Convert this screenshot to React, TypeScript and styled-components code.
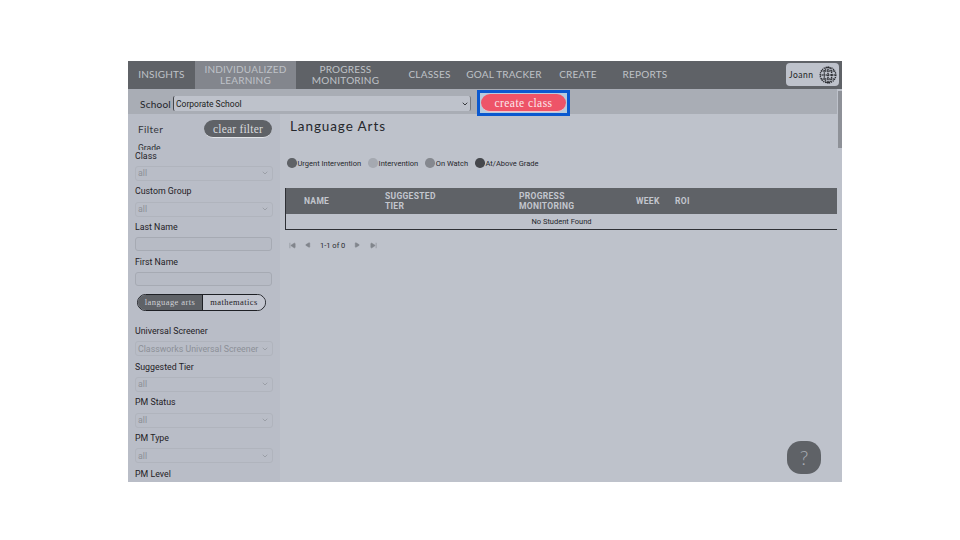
import React from "react";
import styled, { createGlobalStyle } from "styled-components";
import { ChevronDown, SkipBack, SkipForward, Play } from "lucide-react";

const Global = createGlobalStyle`
  html, body { margin: 0; padding: 0; background: #fff; }
  #root { width: 960px; height: 540px; overflow: hidden; }
  * { box-sizing: border-box; }
`;
const Frame = styled.div`
  position: relative; margin: 61px 0 0 128px; width: 714px; height: 421px;
  background: #bec2cb; display: flex; flex-direction: column; overflow: hidden;
  font-family: Roboto, sans-serif; color: #23252a;
`;
const Nav = styled.nav`
  height: 28px; background: #5f6267; display: flex; align-items: stretch; flex: none;
`;
const NavItem = styled.div<{ $w: number; $active?: boolean }>`
  width: ${p => p.$w}px; flex: none; display: flex; align-items: center; justify-content: center; text-align: center; white-space: nowrap;
  padding-bottom: 1px; font: 400 10px/11px Lato, sans-serif; letter-spacing: .2px; color: #bfc2c8;
  background: ${p => (p.$active ? "#83868d" : "transparent")};
`;
const UserChip = styled.div`
  margin: 2px 3px 3px auto; width: 53px; border-radius: 4px; background: #bec2cb; display: flex; align-items: center;
  justify-content: space-between; padding: 0 2px 0 3px; font: 400 8.5px Lato, sans-serif; letter-spacing: .5px; color: #1d1f24;
`;
const SchoolBar = styled.div`
  height: 25px; background: #a9adb5; display: flex; align-items: flex-start; flex: none; padding-left: 12px;
`;
const SchoolLabel = styled.span`
  font: 400 10px/30px Lato, sans-serif; letter-spacing: .25px; color: #22242a; width: 33px; height: 25px;
`;
const SchoolSelect = styled.div`
  width: 298px; height: 15px; margin-top: 7px; background: #bec2cb; border-left: 1px solid #44464b; border-right: 1px solid #77797f;
  border-radius: 2px; display: flex; align-items: center; justify-content: space-between; padding: 1px 1px 0 2px;
  font: 400 8.5px Roboto, sans-serif; color: #1c1e22;
`;
const Highlight = styled.div`
  position: relative; z-index: 2; margin: 1px 0 0 6px; width: 93px; height: 26px; border: 3px solid #0a58cf;
  background: #b7ccde; padding: 1px; display: flex; justify-content: center;
`;
const CreateButton = styled.div`
  width: 85px; height: 18px; border-radius: 9px; background: #ee5468; color: #fbe9ec; border-bottom: 1px solid #f4c3cb;
  font: 400 11.5px/18px "Liberation Serif", serif; letter-spacing: .45px; text-align: center;
`;
const Body = styled.div`
  flex: 1; display: flex; min-height: 0;
`;
const Side = styled.aside`
  width: 152px; flex: none; background: #b9bdc7; padding: 0 0 0 7px; overflow: hidden;
`;
const FilterHead = styled.div`
  height: 36.7px; padding: 6px 8px 0 3px; overflow: hidden;
`;
const FilterRow = styled.div`
  display: flex; justify-content: space-between; align-items: center; height: 18px; font: 400 10px Lato, sans-serif; letter-spacing: .4px; color: #34363c;
`;
const ClearButton = styled.div`
  width: 68px; height: 18px; border-radius: 9px; background: #5f6267; border-bottom: 1px solid #e2e4e8; color: #d8dade;
  font: 400 11.5px/18px "Liberation Serif", serif; letter-spacing: .2px; text-align: center;
`;
const GradeLabel = styled.div`
  font: 400 8.5px/9px Roboto, sans-serif; margin-top: 6px; color: #2a2c31; height: 6px; overflow: hidden;
`;
const FieldLabel = styled.div`
  font: 400 8.8px/10px Roboto, sans-serif; color: #1f2126; height: 10px; margin-bottom: 5.3px;
`;
const Field = styled.div<{ $gap?: number }>`
  margin-bottom: ${p => p.$gap ?? 5.45}px;
`;
const SelectBox = styled.div`
  width: 138px; height: 15px; border: 1px solid #b0b4bd; border-radius: 3px; background: #b9bdc7; display: flex; align-items: center;
  justify-content: space-between; padding: 0 3px 0 2px; font: 400 8.8px Roboto, sans-serif; color: #8c9097;
`;
const TextBox = styled.div`
  width: 137px; height: 14px; border: 1px solid #a6aab3; border-radius: 3px; background: #b7bbc5;
`;
const Toggle = styled.div`
  display: flex; width: 129px; height: 17px; margin-left: 2px; border: 1px solid #1e2025; border-radius: 9px; overflow: hidden;
`;
const ToggleOption = styled.div<{ $on?: boolean; $w: number }>`
  width: ${p => p.$w}px; flex: none; background: ${p => (p.$on ? "#5f6267" : "#c3c6d0")}; color: ${p => (p.$on ? "#cfd1d6" : "#1f2126")};
  border-left: ${p => (p.$on ? "none" : "1px solid #1e2025")}; font: 400 8.5px/15px "Liberation Serif", serif; letter-spacing: .4px; text-align: center;
`;
const SideGap = styled.div`
  height: 14.7px;
`;
const Main = styled.main`
  flex: 1; min-width: 0; padding: 0 4px 0 5px; display: flex; flex-direction: column; position: relative;
`;
const Title = styled.h1`
  margin: 4px 0 0 5px; font: 400 13.5px/16px Lato, sans-serif; letter-spacing: .9px; color: #25272c;
`;
const Legend = styled.div`
  display: flex; gap: 7px; margin: 23px 0 0 2px; height: 12px; align-items: center;
`;
const LegendItem = styled.div`
  display: flex; align-items: center; gap: 1px; font: 400 7.5px Roboto, sans-serif; color: #25272c;
`;
const Dot = styled.span<{ $c: string }>`
  width: 9.5px; height: 9.5px; border-radius: 50%; background: ${p => p.$c};
`;
const Table = styled.div`
  margin-top: 19px; width: 553px; border: 1px solid #2e3035; border-top: none; flex: none;
`;
const Head = styled.div`
  height: 26px; background: #5f6267; display: grid; grid-template-columns: 99px 134px 117px 39px 1fr; align-items: center;
  font: 700 8.5px/10px Roboto, sans-serif; letter-spacing: .3px; color: #c3c6ce;
`;
const HeadCell = styled.div<{ $pad?: number }>`
  padding-left: ${p => p.$pad ?? 0}px;
`;
const Empty = styled.div`
  height: 15px; background: #bec2cb; text-align: center; font: 400 7.5px/15px Roboto, sans-serif; color: #25272c;
`;
const Pager = styled.div`
  display: flex; align-items: center; height: 12px; margin: 9px 0 0 4px; font: 400 7.5px Roboto, sans-serif; color: #2a2c31;
`;
const PagerIcon = styled.span<{ $r: number }>`
  display: inline-flex; margin-right: ${p => p.$r}px; color: #81858c;
`;
const PagerText = styled.span`
  margin-right: 9px;
`;
const Scroll = styled.div`
  position: absolute; right: 0; top: 28px; width: 5px; height: 393px; background: #bec2cb;
`;
const Thumb = styled.div`
  width: 4px; height: 57px; margin: 2px 0 0 1px; background: #8e9198;
`;
const Help = styled.div`
  position: absolute; left: 659px; top: 380px; width: 34px; height: 33px; border-radius: 14px; background: #5f6267; color: #a9adb4;
  font: 300 20px/33px Lato, sans-serif; text-align: center;
`;

const Globe = () => (
  <svg width="18" height="18" viewBox="0 0 18 18" fill="none" stroke="#2a2c31" strokeWidth="1.4" strokeDasharray="1.2 .8">
    <circle cx="9" cy="9" r="7.8" />
    <ellipse cx="9" cy="9" rx="3.8" ry="7.8" />
    <path d="M9 1v16M2.2 5h13.6M1.2 9h15.6M2.2 13h13.6" />
  </svg>
);

const Sel = ({ label, value = "all" }: { label: string; value?: string }) => (
  <Field>
    <FieldLabel>{label}</FieldLabel>
    <SelectBox>{value}<ChevronDown size={8} color="#8c9097" strokeWidth={2} /></SelectBox>
  </Field>
);
const Txt = ({ label, gap }: { label: string; gap?: number }) => (
  <Field $gap={gap}>
    <FieldLabel>{label}</FieldLabel>
    <TextBox />
  </Field>
);

export default function App() {
  return (
    <>
      <Global />
      <Frame>
        <Nav>
          <NavItem $w={67}>INSIGHTS</NavItem>
          <NavItem $w={101} $active>INDIVIDUALIZED<br />LEARNING</NavItem>
          <NavItem $w={99}>PROGRESS<br />MONITORING</NavItem>
          <NavItem $w={69}>CLASSES</NavItem>
          <NavItem $w={80}>GOAL TRACKER</NavItem>
          <NavItem $w={68}>CREATE</NavItem>
          <NavItem $w={66}>REPORTS</NavItem>
          <UserChip>Joann<Globe /></UserChip>
        </Nav>
        <SchoolBar>
          <SchoolLabel>School</SchoolLabel>
          <SchoolSelect>Corporate School<ChevronDown size={8} color="#1c1e22" strokeWidth={2.5} /></SchoolSelect>
          <Highlight><CreateButton>create class</CreateButton></Highlight>
        </SchoolBar>
        <Body>
          <Side>
            <FilterHead>
              <FilterRow>Filter<ClearButton>clear filter</ClearButton></FilterRow>
              <GradeLabel>Grade</GradeLabel>
            </FilterHead>
            <Sel label="Class" />
            <Sel label="Custom Group" />
            <Txt label="Last Name" />
            <Txt label="First Name" gap={8} />
            <Toggle>
              <ToggleOption $on $w={64}>language arts</ToggleOption>
              <ToggleOption $w={63}>mathematics</ToggleOption>
            </Toggle>
            <SideGap />
            <Sel label="Universal Screener" value="Classworks Universal Screener" />
            <Sel label="Suggested Tier" />
            <Sel label="PM Status" />
            <Sel label="PM Type" />
            <FieldLabel>PM Level</FieldLabel>
          </Side>
          <Main>
            <Title>Language Arts</Title>
            <Legend>
              <LegendItem><Dot $c="#5f6267" />Urgent Intervention</LegendItem>
              <LegendItem><Dot $c="#a5a9b1" />Intervention</LegendItem>
              <LegendItem><Dot $c="#85888f" />On Watch</LegendItem>
              <LegendItem><Dot $c="#45474c" />At/Above Grade</LegendItem>
            </Legend>
            <Table>
              <Head>
                <HeadCell $pad={18}>NAME</HeadCell>
                <HeadCell>SUGGESTED<br />TIER</HeadCell>
                <HeadCell>PROGRESS<br />MONITORING</HeadCell>
                <HeadCell>WEEK</HeadCell>
                <HeadCell>ROI</HeadCell>
              </Head>
              <Empty>No Student Found</Empty>
            </Table>
            <Pager>
              <PagerIcon $r={9}><SkipBack size={7} fill="currentColor" /></PagerIcon>
              <PagerIcon $r={9}><Play size={6} fill="currentColor" style={{ transform: "scaleX(-1)" }} /></PagerIcon>
              <PagerText>1-1 of 0</PagerText>
              <PagerIcon $r={10}><Play size={6} fill="currentColor" /></PagerIcon>
              <PagerIcon $r={0}><SkipForward size={7} fill="currentColor" /></PagerIcon>
            </Pager>
          </Main>
        </Body>
        <Scroll><Thumb /></Scroll>
        <Help>?</Help>
      </Frame>
    </>
  );
}
